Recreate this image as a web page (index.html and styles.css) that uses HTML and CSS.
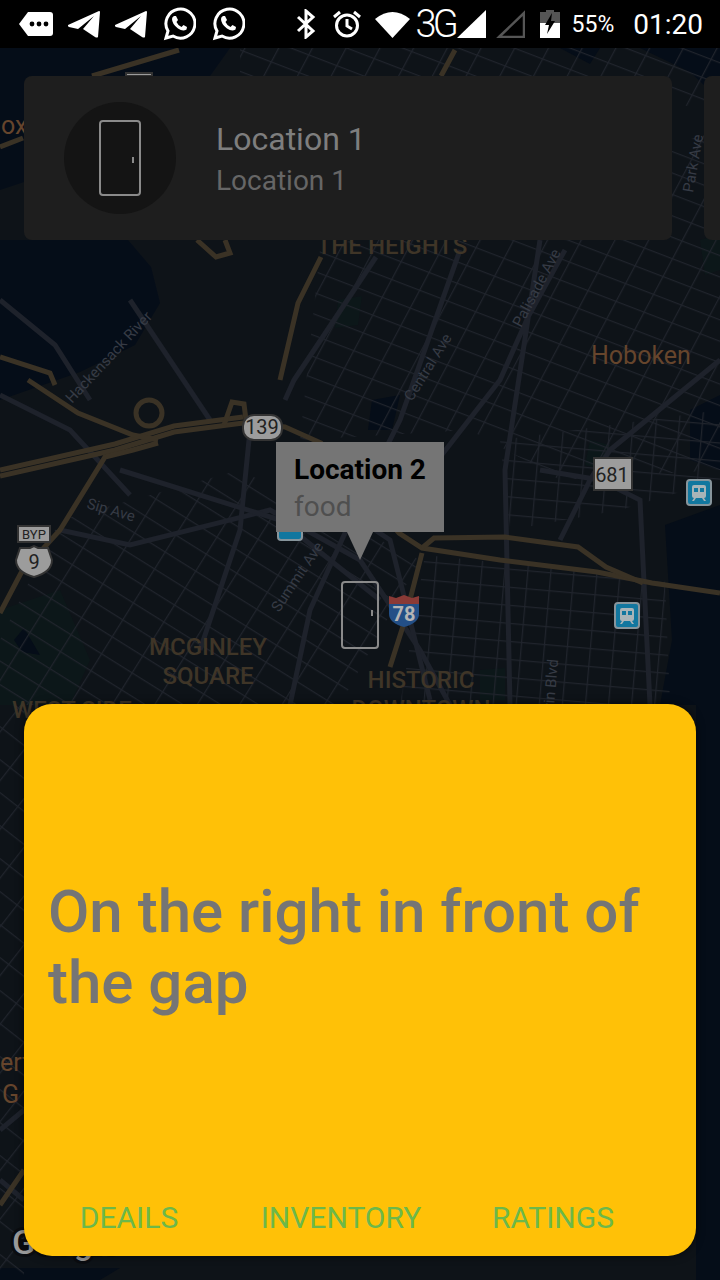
FILE: index.html
```html
<!DOCTYPE html>
<html lang="en">
<head>
    <meta charset="UTF-8">
    <meta name="viewport" content="width=device-width, initial-scale=1.0">
    <title>Locations</title>
    <link rel="stylesheet" href="styles.css">
</head>
<body>
    <div class="screen">
        <!-- map is a free canvas, everything else sits on top of it -->
        <svg class="map" viewBox="0 0 720 1280" width="720" height="1280">
            <defs>
                <pattern id="gridA" width="30" height="20" patternUnits="userSpaceOnUse" patternTransform="rotate(21) skewX(-7)">
                    <path class="grid-line" d="M0 0H30M0 0V20"/>
                </pattern>
                <pattern id="gridB" width="36" height="20" patternUnits="userSpaceOnUse" patternTransform="rotate(32)">
                    <path class="grid-line" d="M0 0H36M0 0V20"/>
                </pattern>
                <pattern id="gridC" width="23" height="18" patternUnits="userSpaceOnUse" patternTransform="rotate(5)">
                    <path class="grid-line" d="M0 0H23M0 0V18"/>
                </pattern>
                <pattern id="gridD" width="30" height="26" patternUnits="userSpaceOnUse" patternTransform="rotate(38)">
                    <path class="grid-line" d="M0 0H30M0 0V26"/>
                </pattern>
            </defs>

            <!-- water -->
            <path class="water" d="M0 48H230L200 90L120 130L60 170L0 190ZM0 240H128L151 267L160 303L135 345L80 372L0 400Z"/>
            <path class="water" d="M640 48H720V100L690 72ZM690 410L720 395V470L690 460ZM665 525L720 505V1280H696V705H660L672 640Z"/>
            <path class="water" d="M560 48L600 48L590 64ZM372 400L400 395L392 430L368 430ZM0 1268L120 1268L100 1280H0Z"/>

            <!-- parks -->
            <path class="park" d="M0 610L60 590L90 660L70 705H0Z"/>
            <path class="water" d="M14 640L24 628L40 655L22 652Z"/>
            <path class="park" d="M338 300L362 296L358 325L335 328ZM590 440L610 445L605 470L585 465ZM480 670L505 668L505 700L480 700ZM700 240L720 235V270L705 275Z"/>

            <!-- street grids -->
            <path fill="url(#gridA)" d="M320 250L720 130V470L560 480L470 430L300 440Z"/>
            <path fill="url(#gridB)" d="M60 520L240 470L420 560L340 705H0V640Z"/>
            <path fill="url(#gridC)" d="M425 555L665 580L670 705H400Z"/>
            <path fill="url(#gridC)" d="M500 440L720 410V480L620 510L510 530Z"/>
            <path fill="url(#gridD)" d="M0 705H24V1280H0Z"/>
            <path fill="url(#gridA)" d="M240 48H720V110L480 80L240 90Z"/>

            <!-- main roads -->
            <path class="road" d="M0 395L70 430L130 495M60 530L130 545L270 510L360 560L420 650L450 705"/>
            <path class="road" d="M0 300L55 345L90 400M130 300L210 420M376 257L294 380L285 400M460 250L400 420L360 500L310 610L290 705"/>
            <path class="road" d="M565 250L528 317L500 380L430 470M720 360L610 450L590 480L560 540M540 470L600 480L640 500L650 705M540 240L505 470L510 705"/>
            <path class="road" d="M285 470L390 540L430 700M250 430L240 530L200 650M120 470L280 520L380 600M0 1130L24 1110M0 1180L24 1200"/>

            <!-- highways -->
            <path class="highway" d="M0 476L115 450L174 432L243 423L285 427L321 443L399 533L422 548L500 560L597 572L652 583L720 593"/>
            <path class="highway" d="M0 470L115 444L174 426L243 417"/>
            <path class="highway" d="M422 548L434 538L505 537L578 547L606 567L643 583"/>
            <path class="highway" d="M28 380L78 413L133 435L158 440"/>
            <path class="highway" d="M0 613L21 573L60 530L105 457L133 450L158 443"/>
            <path class="highway" d="M390 667L404 623L422 553"/>
            <path class="highway" d="M280 380L298 303L321 257M455 50L441 76M179 50L92 76M0 147L23 138M0 357L50 373L55 385"/>
            <path class="highway" d="M197 240L216 257L230 253L225 240M0 1205L24 1170"/>
            <circle class="highway" cx="149" cy="413" r="13"/>
            <path class="highway" d="M224 425L232 402L244 404L246 420"/>

            <!-- place labels -->
            <text class="label-place" x="392" y="254" text-anchor="middle">THE HEIGHTS</text>
            <text class="label-place" x="208" y="655" text-anchor="middle">MCGINLEY</text>
            <text class="label-place" x="208" y="684" text-anchor="middle">SQUARE</text>
            <text class="label-place" x="421" y="688" text-anchor="middle">HISTORIC</text>
            <text class="label-place" x="421" y="717" text-anchor="middle">DOWNTOWN</text>
            <text class="label-place" x="12" y="718">WEST SIDE</text>
            <text class="label-city" x="591" y="364">Hoboken</text>
            <text class="label-city" x="1" y="134">ox</text>
            <text class="label-city" x="0" y="1071">ert</text>
            <text class="label-city" x="2" y="1103">G</text>

            <!-- street labels -->
            <text class="label-street" transform="translate(72 404) rotate(-47)">Hackensack River</text>
            <text class="label-street" transform="translate(412 402) rotate(-58)">Central Ave</text>
            <text class="label-street" transform="translate(521 328) rotate(-62)">Palisade Ave</text>
            <text class="label-street" transform="translate(693 193) rotate(-80)">Park Ave</text>
            <text class="label-street" transform="translate(86 508) rotate(16)">Sip Ave</text>
            <text class="label-street" transform="translate(279 613) rotate(-56)">Summit Ave</text>
            <text class="label-street" transform="translate(552 730) rotate(-85)">Marin Blvd</text>

            <!-- route signs -->
            <rect class="sign" x="243" y="415" width="39" height="25" rx="11"/>
            <text class="sign-text" x="262" y="434" text-anchor="middle">139</text>
            <rect class="sign" x="594" y="458" width="38" height="32"/>
            <text class="sign-text" x="612" y="482" text-anchor="middle">681</text>
            <rect class="sign" x="18" y="526" width="32" height="16"/>
            <text class="sign-small" x="34" y="539" text-anchor="middle">BYP</text>
            <path class="sign" d="M20 548H30L34 546L38 548H48L52 560Q52 572 34 577Q16 572 16 560Z"/>
            <text class="sign-text" x="34" y="569" text-anchor="middle">9</text>
            <path class="shield-blue" d="M389 600H419V614Q419 623 404 627Q389 623 389 614Z"/>
            <path class="shield-red" d="M389 596L396 598L404 595L412 598L419 596V604H389Z"/>
            <text class="shield-text" x="404" y="621" text-anchor="middle">78</text>
            <g class="transit" transform="translate(687 480)">
                <rect class="transit-box" width="24" height="25" rx="3"/>
                <path class="transit-train" d="M7 5H17Q19 5 19 7V16Q19 18 17 18L19 21H17L15 18H9L7 21H5L7 18Q5 18 5 16V7Q5 5 7 5Z"/>
                <path class="transit-window" d="M7 8H11V12H7ZM13 8H17V12H13Z"/>
            </g>
            <g class="transit" transform="translate(615 603)">
                <rect class="transit-box" width="24" height="25" rx="3"/>
                <path class="transit-train" d="M7 5H17Q19 5 19 7V16Q19 18 17 18L19 21H17L15 18H9L7 21H5L7 18Q5 18 5 16V7Q5 5 7 5Z"/>
                <path class="transit-window" d="M7 8H11V12H7ZM13 8H17V12H13Z"/>
            </g>
            <g class="transit" transform="translate(278 516)">
                <rect class="transit-box" width="24" height="24" rx="3"/>
            </g>
            <path class="sign" d="M126 73H152V76H126Z"/>
            <text class="map-logo" x="12" y="1254">Google</text>
        </svg>

        <div class="status-bar">
            <div class="status-group">
                <svg class="icon-msg" viewBox="0 0 34 24" width="34" height="24">
                    <path class="fill-white" d="M9 0H31Q34 0 34 3V21Q34 24 31 24H9L0 12Z"/>
                    <circle class="fill-black" cx="13" cy="12" r="2.4"/>
                    <circle class="fill-black" cx="20" cy="12" r="2.4"/>
                    <circle class="fill-black" cx="27" cy="12" r="2.4"/>
                </svg>
                <svg class="icon-tg" viewBox="0 0 32 28" width="32" height="28">
                    <path class="fill-white" d="M0 15L31 1Q32 1 32 2L30 27Q29 28 27 27L15 19L26 6L10 19L1 17Q-1 16 0 15Z"/>
                </svg>
                <svg class="icon-tg" viewBox="0 0 32 28" width="32" height="28">
                    <path class="fill-white" d="M0 15L31 1Q32 1 32 2L30 27Q29 28 27 27L15 19L26 6L10 19L1 17Q-1 16 0 15Z"/>
                </svg>
                <svg class="icon-wa" viewBox="0 0 34 34" width="34" height="34">
                    <path class="stroke-white" d="M4 31L6 24A14.5 14.5 0 1 1 11 29Z"/>
                    <path class="fill-white" d="M12 9L14 9L16 13L14.500 15Q16 18.500 19.500 20L21.500 18L25 20L24.500 22.500Q21 25 16 21.500Q10 17 10 12Q10 10 12 9Z"/>
                </svg>
                <svg class="icon-wa" viewBox="0 0 34 34" width="34" height="34">
                    <path class="stroke-white" d="M4 31L6 24A14.5 14.5 0 1 1 11 29Z"/>
                    <path class="fill-white" d="M12 9L14 9L16 13L14.500 15Q16 18.500 19.500 20L21.500 18L25 20L24.500 22.500Q21 25 16 21.500Q10 17 10 12Q10 10 12 9Z"/>
                </svg>
            </div>
            <div class="status-group status-right">
                <svg class="icon-bt" viewBox="0 0 20 30" width="20" height="30">
                    <path class="stroke-white" d="M2 8L17 22L10 28V2L17 8L2 22"/>
                </svg>
                <svg class="icon-alarm" viewBox="0 0 28 28" width="28" height="28">
                    <circle class="stroke-white" cx="14" cy="15.500" r="10.500"/>
                    <path class="stroke-white" d="M14 9V16L19 19M1 7L7 2M27 7L21 2"/>
                </svg>
                <svg class="icon-wifi" viewBox="0 0 35 27" width="35" height="27">
                    <path class="fill-white" d="M0 8Q17.500 -6 35 8L17.500 27Z"/>
                </svg>
                <span class="net-type">3G</span>
                <svg class="icon-signal" viewBox="0 0 29 28" width="29" height="28">
                    <path class="fill-white" d="M0 28L29 0V28Z"/>
                </svg>
                <svg class="icon-signal-empty" viewBox="0 0 29 28" width="29" height="28">
                    <path class="stroke-gray" d="M3 27L28 3V27Z"/>
                </svg>
                <svg class="icon-battery" viewBox="0 0 20 28" width="20" height="28">
                    <path class="fill-gray" d="M6 0H14V2H20V13H0V2H6Z"/>
                    <path class="fill-white" d="M0 13H20V28H0Z"/>
                    <path class="fill-black" d="M12 3L5 15H9L7 24L15 11H11Z"/>
                </svg>
                <span class="battery-pct">55%</span>
                <span class="clock">01:20</span>
            </div>
        </div>

        <div class="card-row">
            <div class="place-card">
                <div class="place-avatar">
                    <svg class="door" viewBox="0 0 42 76" width="42" height="76">
                        <rect class="door-frame" x="1" y="1" width="40" height="74" rx="3"/>
                        <path class="door-frame" d="M34 37V43"/>
                    </svg>
                </div>
                <div class="place-text">
                    <div class="place-title">Location 1</div>
                    <div class="place-sub">Location 1</div>
                </div>
            </div>
            <div class="place-card"></div>
        </div>

        <div class="marker">
            <div class="marker-tip">
                <div class="tip-title">Location 2</div>
                <div class="tip-sub">food</div>
            </div>
            <div class="tip-arrow"></div>
            <svg class="door marker-door" viewBox="0 0 38 68" width="38" height="68">
                <rect class="door-frame" x="1" y="1" width="36" height="66" rx="3"/>
                <path class="door-frame" d="M31 29V35"/>
            </svg>
        </div>

        <div class="sheet">
            <div class="sheet-body">On the right in front of the gap</div>
            <div class="sheet-tabs">
                <span class="sheet-tab">DEAILS</span>
                <span class="sheet-tab">INVENTORY</span>
                <span class="sheet-tab">RATINGS</span>
            </div>
        </div>
    </div>
</body>
</html>
```

FILE: styles.css
```css
* {
    margin: 0;
    padding: 0;
    box-sizing: border-box;
}

body {
    font-family: 'Roboto', sans-serif;
    background: #0e1318;
}

.screen {
    position: relative;
    width: 720px;
    height: 1280px;
    overflow: hidden;
}

/* map */
.map {
    position: absolute;
    top: 0;
    left: 0;
    background: #0e1318;
}

.water { fill: #050d18; }
.park { fill: #0c1719; }

.grid-line {
    fill: none;
    stroke: #20242c;
    stroke-width: 2.5;
}

.road {
    fill: none;
    stroke: #1e222b;
    stroke-width: 5;
}

.highway {
    fill: none;
    stroke: #3a3225;
    stroke-width: 5;
}

.label-place {
    font-family: 'Roboto', sans-serif;
    font-size: 24px;
    font-weight: 500;
    fill: #3f3527;
}

.label-city {
    font-family: 'Roboto', sans-serif;
    font-size: 25px;
    fill: #66452c;
}

.label-street {
    font-family: 'Roboto', sans-serif;
    font-size: 15px;
    fill: #363b45;
}

.sign {
    fill: #9c9c9c;
    stroke: #333;
    stroke-width: 2;
}

.sign-text {
    font-family: 'Roboto', sans-serif;
    font-size: 20px;
    fill: #222;
}

.sign-small {
    font-family: 'Roboto', sans-serif;
    font-size: 13px;
    fill: #222;
}

.shield-blue { fill: #234f86; }
.shield-red { fill: #8a3a36; }

.shield-text {
    font-family: 'Roboto', sans-serif;
    font-size: 20px;
    font-weight: 700;
    fill: #b4b4b4;
}

.transit-box {
    fill: #12779f;
    stroke: #87959c;
    stroke-width: 2;
}

.transit-train { fill: #a9b4b8; }
.transit-window { fill: #12779f; }

.map-logo {
    font-family: 'Roboto', sans-serif;
    font-size: 34px;
    font-weight: 500;
    fill: #9a9a9a;
    stroke: #0a0c10;
    stroke-width: 6;
    paint-order: stroke;
}

/* status bar */
.status-bar {
    position: relative;
    height: 48px;
    padding: 0 17px 0 19px;
    background: #000;
    display: flex;
    justify-content: space-between;
    align-items: center;
    color: #fff;
}

.status-group {
    display: flex;
    align-items: center;
    gap: 15px;
}

.status-right { gap: 0; }

.fill-white { fill: #fff; }
.fill-black { fill: #000; }
.fill-gray { fill: #555; }

.stroke-white {
    fill: none;
    stroke: #fff;
    stroke-width: 3;
}

.stroke-gray {
    fill: none;
    stroke: #555;
    stroke-width: 2.5;
}

.icon-alarm { margin-left: 17px; }
.icon-wifi { margin-left: 14px; }
.icon-signal-empty { margin-left: 10px; }
.icon-battery { margin-left: 15px; }

.net-type {
    width: 36px;
    margin-left: 6px;
    margin-right: 5px;
    font-size: 38px;
    font-weight: 300;
    letter-spacing: -4px;
    white-space: nowrap;
}

.battery-pct {
    margin-left: 12px;
    font-size: 23px;
}

.clock {
    margin-left: 19px;
    font-size: 28px;
}

/* cards along the top */
.card-row {
    position: absolute;
    top: 76px;
    left: 24px;
    display: flex;
    gap: 32px;
}

.place-card {
    flex: none;
    width: 648px;
    height: 164px;
    padding: 0 40px;
    background: #1e1e1e;
    border-radius: 8px;
    display: flex;
    align-items: center;
    gap: 40px;
}

.place-avatar {
    width: 112px;
    height: 112px;
    border-radius: 50%;
    background: #141414;
    display: flex;
    justify-content: center;
    align-items: center;
}

.place-title {
    font-size: 32px;
    line-height: 40px;
    color: #7e7e7e;
    margin-top: 3px;
}

.place-sub {
    font-size: 28px;
    line-height: 40px;
    color: #666;
    margin-top: 2px;
}

.door-frame {
    fill: none;
    stroke: #8a8a8a;
    stroke-width: 2;
}

/* marker with its tip */
.marker {
    position: absolute;
    top: 442px;
    left: 276px;
    width: 168px;
    display: flex;
    flex-direction: column;
    align-items: center;
}

.marker-tip {
    width: 168px;
    height: 90px;
    padding: 10px 18px;
    background: #757575;
}

.tip-title {
    font-size: 28px;
    line-height: 36px;
    font-weight: 700;
    color: #000;
}

.tip-sub {
    font-size: 28px;
    line-height: 38px;
    color: #4f4f4f;
}

.tip-arrow {
    width: 0;
    height: 0;
    border-left: 13px solid transparent;
    border-right: 13px solid transparent;
    border-top: 28px solid #757575;
}

.marker-door { margin-top: 21px; }

/* bottom sheet */
.sheet {
    position: absolute;
    left: 24px;
    bottom: 24px;
    width: 672px;
    height: 552px;
    background: #ffc107;
    border-radius: 28px;
    box-shadow: 0 0 8px rgba(0, 0, 0, 0.6);
    display: flex;
    flex-direction: column;
}

.sheet-body {
    flex: 1;
    display: flex;
    align-items: center;
    padding: 0 24px 10px;
    font-size: 60px;
    line-height: 71px;
    font-weight: 500;
    color: #757575;
}

.sheet-tabs {
    display: grid;
    grid-template-columns: repeat(3, 212px);
    justify-items: center;
    margin-left: -1px;
    padding-bottom: 20px;
}

.sheet-tab {
    font-size: 30px;
    line-height: 36px;
    color: #6cb84a;
}
```
